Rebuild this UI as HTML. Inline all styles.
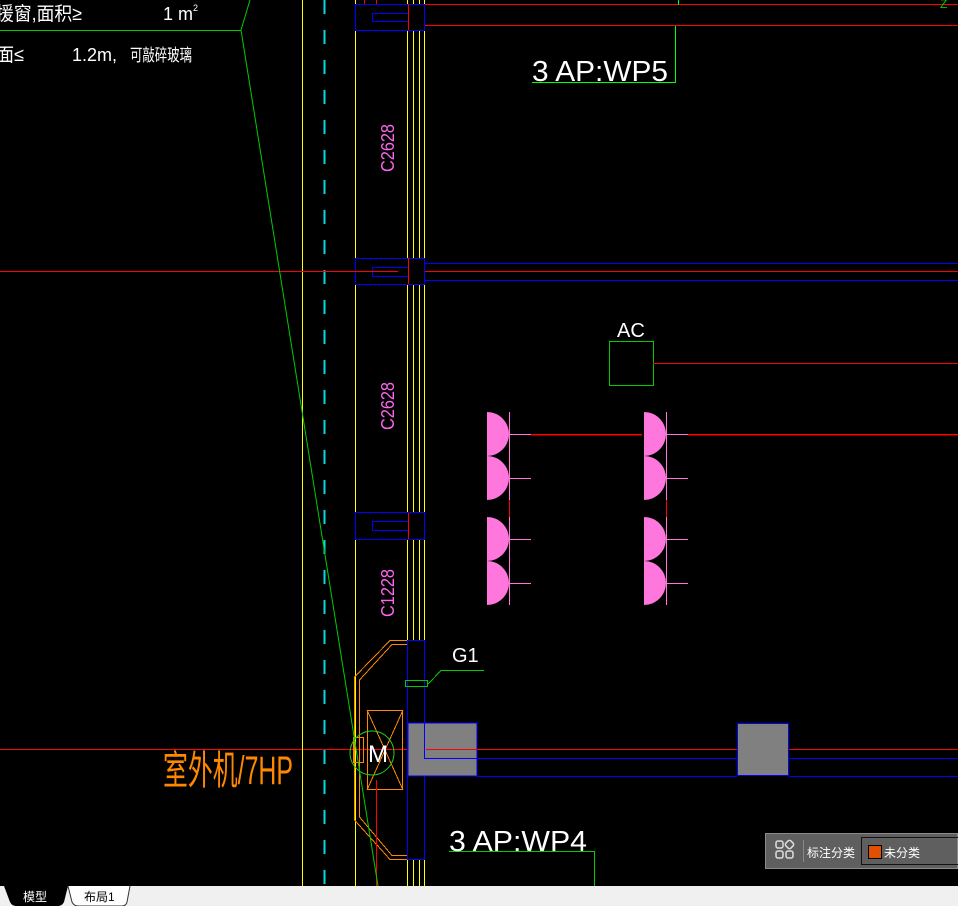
<!DOCTYPE html>
<html><head><meta charset="utf-8"><style>
html,body{margin:0;padding:0;background:#000;width:958px;height:906px;overflow:hidden}
svg{position:absolute;left:0;top:0}
.t{font-family:"Liberation Sans","Noto Sans CJK SC",sans-serif;}
#bar{position:absolute;left:0;top:886px;width:958px;height:20px;background:#f0f0f0}
#panel{position:absolute;left:765px;top:833px;width:193px;height:36px;background:#5f5f5f;border:1px solid #8a8a8a;box-sizing:border-box;font-family:"Liberation Sans","Noto Sans CJK SC",sans-serif;color:#fff;font-size:12px}
</style></head><body>
<svg width="958" height="906" viewBox="0 0 958 906">
<g fill="none" stroke-width="1" shape-rendering="crispEdges">
<line x1="0" y1="271.5" x2="958" y2="271.5" stroke="#f00"/>
<line x1="0" y1="749.5" x2="958" y2="749.5" stroke="#f00"/>
<line x1="376" y1="4.5" x2="958" y2="4.5" stroke="#f00"/>
<polyline points="364.5,0 364.5,25.5 958,25.5" stroke="#f00"/>
<line x1="376.5" y1="0" x2="376.5" y2="4" stroke="#f00"/>
<line x1="678.5" y1="0" x2="678.5" y2="5" stroke="#0f0"/>
<line x1="302.5" y1="0" x2="302.5" y2="886" stroke="#ff0"/>
<line x1="355.5" y1="0" x2="355.5" y2="886" stroke="#ff0"/>
<line x1="407.5" y1="0" x2="407.5" y2="886" stroke="#ff0"/>
<line x1="413.5" y1="0" x2="413.5" y2="886" stroke="#ff0"/>
<line x1="419.5" y1="0" x2="419.5" y2="886" stroke="#ff0"/>
<line x1="424.5" y1="0" x2="424.5" y2="886" stroke="#ff0"/>
<line x1="324.5" y1="0" x2="324.5" y2="886" stroke="#0dd" stroke-dasharray="14,16" stroke-width="2"/>
<rect x="355.5" y="4.5" width="69" height="26" stroke="#00f" fill="#000"/>
<rect x="372.5" y="13.5" width="36" height="8" stroke="#00f"/>
<rect x="355.5" y="258.5" width="69" height="26" stroke="#00f" fill="#000"/>
<rect x="372.5" y="267.5" width="36" height="9" stroke="#00f"/>
<line x1="424" y1="263.5" x2="958" y2="263.5" stroke="#00f"/>
<line x1="424" y1="280.5" x2="958" y2="280.5" stroke="#00f"/>
<line x1="0" y1="271.5" x2="398" y2="271.5" stroke="#f00"/>
<rect x="355.5" y="512.5" width="69" height="27" stroke="#00f" fill="#000"/>
<rect x="372.5" y="521.5" width="36" height="9" stroke="#00f"/>
<line x1="408.5" y1="513" x2="408.5" y2="539" stroke="#f00"/>
<line x1="408.5" y1="258" x2="408.5" y2="284" stroke="#f00"/>
<line x1="408.5" y1="4" x2="408.5" y2="30" stroke="#f00"/>
<polyline points="675.5,26 675.5,82.5 532,82.5" stroke="#0f0"/>
<rect x="609.5" y="341.5" width="44" height="44" stroke="#0c0"/>
<line x1="653" y1="363.5" x2="958" y2="363.5" stroke="#f00"/>
<line x1="509.5" y1="412" x2="509.5" y2="605" stroke="#f7d"/>
<line x1="666.5" y1="412" x2="666.5" y2="605" stroke="#f7d"/>
<line x1="509.5" y1="500" x2="509.5" y2="517" stroke="#f00"/>
<line x1="666.5" y1="500" x2="666.5" y2="517" stroke="#f00"/>
<g stroke="#f7d">
<line x1="509" y1="434.5" x2="531" y2="434.5"/><line x1="509" y1="478.5" x2="531" y2="478.5"/>
<line x1="509" y1="539.5" x2="531" y2="539.5"/><line x1="509" y1="583.5" x2="531" y2="583.5"/>
<line x1="666" y1="434.5" x2="688" y2="434.5"/><line x1="666" y1="478.5" x2="688" y2="478.5"/>
<line x1="666" y1="539.5" x2="688" y2="539.5"/><line x1="666" y1="583.5" x2="688" y2="583.5"/>
</g>
<line x1="531" y1="434.5" x2="642" y2="434.5" stroke="#f00" stroke-width="1.5"/>
<line x1="688" y1="434.5" x2="958" y2="434.5" stroke="#f00" stroke-width="1.5"/>
<rect x="407.5" y="640.5" width="17" height="219" stroke="#00f" fill="#000"/>
<rect x="408" y="723" width="69" height="53" fill="#808080" stroke="#00f"/>
<rect x="737.5" y="723.5" width="51" height="52" fill="#808080" stroke="#00f"/>
<polyline points="424.5,640 424.5,758.5 737,758.5" stroke="#00f"/>
<line x1="789" y1="758.5" x2="958" y2="758.5" stroke="#00f"/>
<line x1="477" y1="776.5" x2="737" y2="776.5" stroke="#00f"/>
<line x1="789" y1="776.5" x2="958" y2="776.5" stroke="#00f"/>
<line x1="426" y1="749.5" x2="600" y2="749.5" stroke="#f00"/>
<g stroke="#f80">
<polyline points="407,640.5 390,640.5 354.5,677 354.5,820 390,859.5 407,859.5"/>
<polyline points="407,644.5 392,644.5 359.5,680 359.5,817 392,855.5 407,855.5"/>
<rect x="367.5" y="710.5" width="35" height="79"/>
<line x1="367" y1="710" x2="403" y2="790"/><line x1="403" y1="710" x2="367" y2="790"/>
<rect x="353.5" y="737.5" width="10" height="25"/>
</g>
<circle cx="372" cy="753" r="22" stroke="#2c2" shape-rendering="auto"/>
<line x1="376.5" y1="780" x2="376.5" y2="886" stroke="#f00"/>
<rect x="405.5" y="680.5" width="22" height="6" stroke="#0c0"/>
<polyline points="428,684 441,670.5 484,670.5" stroke="#0c0"/>
<polyline points="449,851.5 594.5,851.5 594.5,886" stroke="#0c0"/>
<line x1="0" y1="30.5" x2="241" y2="30.5" stroke="#0c0"/>
</g>
<polyline points="250,0 241,30 378,886" fill="none" stroke="#0c0" stroke-width="1"/>
<g fill="#f7d">
<path d="M487,412 A22,22 0 0 1 487,456 Z"/><path d="M487,456 A22,22 0 0 1 487,500 Z"/>
<path d="M487,517 A22,22 0 0 1 487,561 Z"/><path d="M487,561 A22,22 0 0 1 487,605 Z"/>
<path d="M644,412 A22,22 0 0 1 644,456 Z"/><path d="M644,456 A22,22 0 0 1 644,500 Z"/>
<path d="M644,517 A22,22 0 0 1 644,561 Z"/><path d="M644,561 A22,22 0 0 1 644,605 Z"/>
</g>
<g class="t" fill="#fff">
<text x="-4" y="20" font-size="19" textLength="86" lengthAdjust="spacingAndGlyphs">援窗,面积≥</text>
<text x="163" y="20" font-size="18">1 m<tspan font-size="9" dy="-9">2</tspan></text>
<text x="-4" y="61" font-size="19" textLength="28" lengthAdjust="spacingAndGlyphs">面≤</text>
<text x="72" y="61" font-size="18">1.2m,</text>
<text x="130" y="61" font-size="17" textLength="62" lengthAdjust="spacingAndGlyphs">可敲碎玻璃</text>
<text x="532" y="81" font-size="29" textLength="136" lengthAdjust="spacingAndGlyphs">3 AP:WP5</text>
<text x="617" y="337" font-size="20">AC</text>
<text x="452" y="662" font-size="20">G1</text>
<text x="449" y="851" font-size="29" textLength="138" lengthAdjust="spacingAndGlyphs">3 AP:WP4</text>
<text x="368" y="762" font-size="24">M</text>
</g>
<text class="t" x="163" y="784" font-size="40" fill="#f80" textLength="130" lengthAdjust="spacingAndGlyphs">室外机/7HP</text>
<g class="t" fill="#f6e" font-size="18">
<text transform="translate(394,172) rotate(-90)" textLength="48" lengthAdjust="spacingAndGlyphs">C2628</text>
<text transform="translate(394,430) rotate(-90)" textLength="48" lengthAdjust="spacingAndGlyphs">C2628</text>
<text transform="translate(394,617) rotate(-90)" textLength="48" lengthAdjust="spacingAndGlyphs">C1228</text>
</g>
<text x="940" y="8" font-size="12" fill="#0c0" class="t">Z</text>
</svg>
<div id="bar">
<svg width="200" height="20" style="position:absolute;left:0;top:0">
<path d="M4,0 L10,16 Q12,20 16,20 L58,20 Q62,20 64,16 L68,0 Z" fill="#000"/>
<path d="M68,0 L72,16 Q74,20 78,20 L122,20 Q126,20 127,16 L130,0" fill="#fff" stroke="#333"/>
<text x="23" y="15" font-size="12" fill="#fff" class="t">模型</text>
<text x="84" y="15" font-size="12" fill="#000" class="t">布局1</text>
</svg>
</div>
<div id="panel">
<svg width="24" height="24" style="position:absolute;left:8px;top:5px" fill="none" stroke="#ddd" stroke-width="1.5">
<rect x="2" y="2" width="7" height="7" rx="2"/><rect x="12" y="2" width="7" height="7" rx="2" transform="rotate(45 15.5 5.5)"/>
<rect x="2" y="12" width="7" height="7" rx="2"/><rect x="12" y="12" width="7" height="7" rx="2"/>
</svg>
<div style="position:absolute;left:37px;top:6px;width:1px;height:22px;background:#888"></div>
<div style="position:absolute;left:41px;top:10px">标注分类</div>
<div style="position:absolute;left:95px;top:3px;width:100px;height:28px;border:1px solid #111;box-sizing:border-box">
<div style="position:absolute;left:6px;top:7px;width:12px;height:12px;background:#e05000;border:1px solid #000"></div>
<div style="position:absolute;left:22px;top:6px">未分类</div>
</div>
</div>
</body></html>
